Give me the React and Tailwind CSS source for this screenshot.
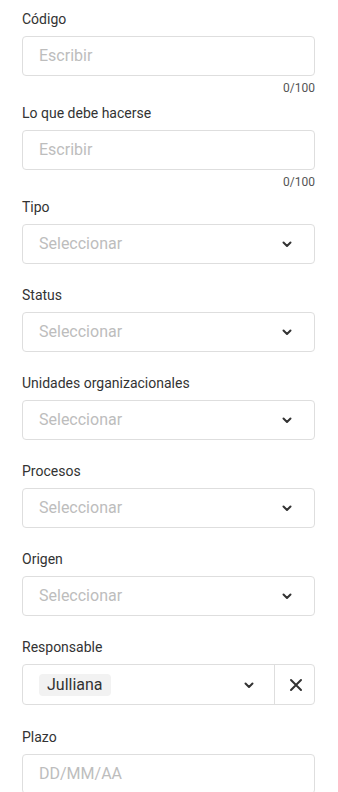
import React from "react";

const Chevron = () => (
  <svg width="12" height="12" viewBox="0 0 12 12" fill="none" className="shrink-0">
    <polyline points="2.5,4.5 6,8 9.5,4.5" stroke="#333" strokeWidth="2" strokeLinecap="round" strokeLinejoin="round" />
  </svg>
);

const Close = () => (
  <svg width="14" height="14" viewBox="0 0 14 14" fill="none">
    <path d="M2 2L12 12M12 2L2 12" stroke="#333" strokeWidth="2" strokeLinecap="round" />
  </svg>
);

const Label = ({ children }) => (
  <div className="text-sm leading-5 text-[#333] mb-[7px]">{children}</div>
);

const TextField = ({ label }) => (
  <div className="mb-[7px]">
    <Label>{label}</Label>
    <div className="h-10 border border-[#dedede] rounded flex items-center px-4 text-base text-[#bdbdbd]">
      Escribir
    </div>
    <div className="mt-1 text-xs leading-4 text-[#555] text-right">0/100</div>
  </div>
);

const SelectField = ({ label }) => (
  <div className="mb-[21px]">
    <Label>{label}</Label>
    <div className="h-10 border border-[#dedede] rounded flex items-center justify-between pl-4 pr-[21px] text-base text-[#bdbdbd]">
      <span>Seleccionar</span>
      <Chevron />
    </div>
  </div>
);

export default function App() {
  return (
    <div className="min-h-screen bg-white pl-[22px] pr-[23px] pt-[9px] font-['Roboto',sans-serif]">
      <TextField label="Código" />
      <TextField label="Lo que debe hacerse" />
      <SelectField label="Tipo" />
      <SelectField label="Status" />
      <SelectField label="Unidades organizacionales" />
      <SelectField label="Procesos" />
      <SelectField label="Origen" />

      {/* Responsable */}
      <div className="mb-[22px]">
        <Label>Responsable</Label>
        <div className="h-[41px] border border-[#dedede] rounded flex items-stretch">
          <div className="flex-1 flex items-center justify-between pl-4 pr-[19px]">
            <span className="bg-[#f2f2f2] rounded-sm px-2 h-[22px] flex items-center text-base text-[#333]">
              Julliana
            </span>
            <Chevron />
          </div>
          <div className="w-[40px] border-l border-[#dedede] flex items-center justify-center pl-[2px]">
            <Close />
          </div>
        </div>
      </div>

      <div>
        <Label>Plazo</Label>
        <div className="h-10 border border-[#dedede] rounded flex items-center px-4 text-base text-[#bdbdbd]">
          DD/MM/AA
        </div>
      </div>
    </div>
  );
}
